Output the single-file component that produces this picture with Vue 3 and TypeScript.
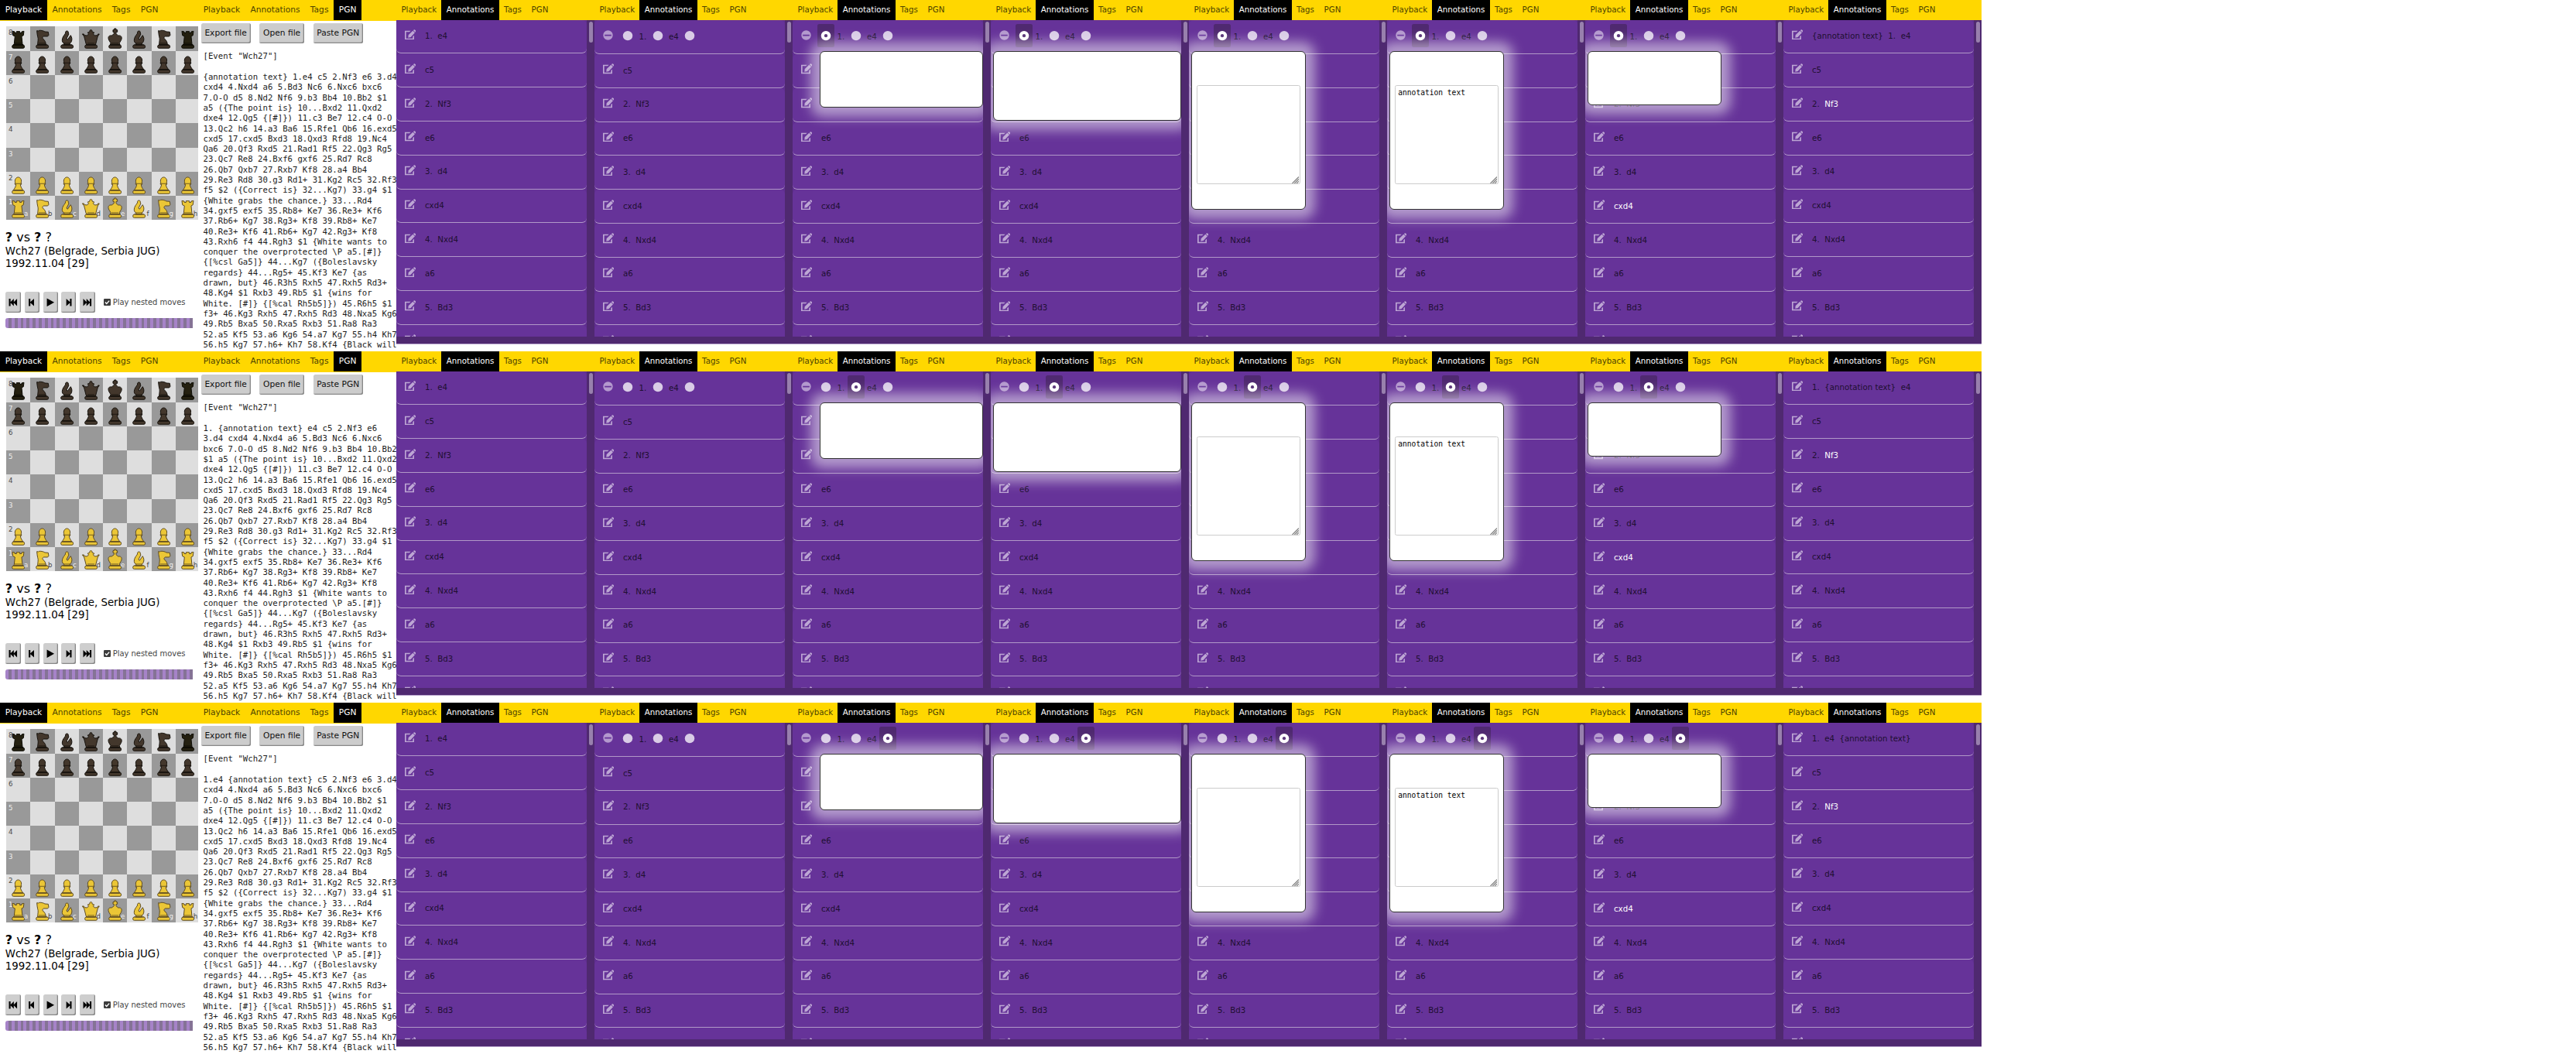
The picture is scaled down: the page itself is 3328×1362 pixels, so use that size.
<script setup lang="ts">
type Kind = 'r' | 'n' | 'b' | 'q' | 'k' | 'p'
interface Popup { left: number; right: number; height: number; area: boolean; text: string }
interface Column { slots: boolean; popup: Popup | null; lit: string; result: boolean }

const tabs = ['Playback', 'Annotations', 'Tags', 'PGN']
const back: Kind[] = ['r', 'n', 'b', 'q', 'k', 'b', 'n', 'r']
const files = 'abcdefgh'

interface Square { dark: boolean; rank: string; file: string; kind: Kind | ''; white: boolean }
const squares: Square[] = []
for (let r = 0; r < 8; r++) {
  for (let f = 0; f < 8; f++) {
    squares.push({
      dark: (r + f) % 2 === 1,
      rank: f === 0 ? String(8 - r) : '',
      file: r === 7 ? files[f] : '',
      kind: r === 0 || r === 7 ? back[f] : r === 1 || r === 6 ? 'p' : '',
      white: r > 4,
    })
  }
}

const base = 'M28 72H66Q71 73 71 79Q71 85 66 85H28Q23 85 23 79Q23 73 28 72Z'
const shapes: Record<Kind, string> = {
  p: 'M36 43C31 36 36 21 46.500 21C57 21 62 36 57 43H59V49H55C56 60 62 67 66 72H27C31 67 37 60 38 49H34V43Z' + base,
  r: 'M24 19L33 21V25L40 26V20H53V26L60 25V21L69 19L67 35L60 39L63 68L66 72H28L31 68L34 39L26 35Z' + base,
  n: 'M26 17L32 18L35 16C44 15 52 18 57 21L70 22L72 34L68 39H52C49 41 47 44 48 47C58 54 61 63 61 72H29C29 58 33 50 29 40C27 33 27 26 26 17Z' + base,
  b: 'M41 27C37 16 55 14 52 27L54 30L45 48L49 52L61 35C66 43 68 52 63 61L58 67V72H35V67L29 60C25 48 34 36 41 27Z' + base,
  q: 'M13 30L19 30L21 35L32 36L38 29L33 25L42 21C40 11 53 11 51 21L60 25L55 29L61 36L72 35L74 30L79 30L73 39L66 66L64 72H29L27 66L20 39Z' + base,
  k: 'M39 14H44V9H51V14H56V22H51V29L59 36C74 34 75 46 70 55L64 65L66 72H28L30 65L24 55C18 44 21 34 34 36L43 29V22H39Z' + base,
}

const rest = `13.Qc2 h6 14.a3 Ba6 15.Rfe1 Qb6 16.exd5
cxd5 17.cxd5 Bxd3 18.Qxd3 Rfd8 19.Nc4
Qa6 20.Qf3 Rxd5 21.Rad1 Rf5 22.Qg3 Rg5
23.Qc7 Re8 24.Bxf6 gxf6 25.Rd7 Rc8
26.Qb7 Qxb7 27.Rxb7 Kf8 28.a4 Bb4
29.Re3 Rd8 30.g3 Rd1+ 31.Kg2 Rc5 32.Rf3
f5 $2 ({Correct is} 32...Kg7) 33.g4 $1
{White grabs the chance.} 33...Rd4
34.gxf5 exf5 35.Rb8+ Ke7 36.Re3+ Kf6
37.Rb6+ Kg7 38.Rg3+ Kf8 39.Rb8+ Ke7
40.Re3+ Kf6 41.Rb6+ Kg7 42.Rg3+ Kf8
43.Rxh6 f4 44.Rgh3 $1 {White wants to
conquer the overprotected \\P a5.[#]}
{[%csl Ga5]} 44...Kg7 ({Boleslavsky
regards} 44...Rg5+ 45.Kf3 Ke7 {as
drawn, but} 46.R3h5 Rxh5 47.Rxh5 Rd3+
48.Kg4 $1 Rxb3 49.Rb5 $1 {wins for
White. [#]} {[%cal Rh5b5]}) 45.R6h5 $1
f3+ 46.Kg3 Rxh5 47.Rxh5 Rd3 48.Nxa5 Kg6
49.Rb5 Bxa5 50.Rxa5 Rxb3 51.Ra8 Ra3
52.a5 Kf5 53.a6 Kg6 54.a7 Kg7 55.h4 Kh7
56.h5 Kg7 57.h6+ Kh7 58.Kf4 {Black will
lose both f-pawns.}`
const opening = `cxd4 4.Nxd4 a6 5.Bd3 Nc6 6.Nxc6 bxc6
7.O-O d5 8.Nd2 Nf6 9.b3 Bb4 10.Bb2 $1
a5 ({The point is} 10...Bxd2 11.Qxd2
dxe4 12.Qg5 {[#]}) 11.c3 Be7 12.c4 O-O
`
const pgn = [
  '{annotation text} 1.e4 c5 2.Nf3 e6 3.d4\n' + opening + rest,
  `1. {annotation text} e4 c5 2.Nf3 e6
3.d4 cxd4 4.Nxd4 a6 5.Bd3 Nc6 6.Nxc6
bxc6 7.O-O d5 8.Nd2 Nf6 9.b3 Bb4 10.Bb2
$1 a5 ({The point is} 10...Bxd2 11.Qxd2
dxe4 12.Qg5 {[#]}) 11.c3 Be7 12.c4 O-O
` + rest,
  '1.e4 {annotation text} c5 2.Nf3 e6 3.d4\n' + opening + rest,
].map((t) => '[Event "Wch27"]\n\n' + t)

const results = [
  ['{annotation text}', '1.', 'e4'],
  ['1.', '{annotation text}', 'e4'],
  ['1.', 'e4', '{annotation text}'],
]
const moves = [['c5'], ['2.', 'Nf3'], ['e6'], ['3.', 'd4'], ['cxd4'], ['4.', 'Nxd4'], ['a6'], ['5.', 'Bd3'], ['Nc6']]

const pop = (left: number, right: number, height: number, area = false, text = ''): Popup => ({ left, right, height, area, text })
const columns: Column[] = [
  { slots: false, popup: null, lit: '', result: false },
  { slots: true, popup: null, lit: '', result: false },
  { slots: true, popup: pop(35.3, 246.3, 72.8), lit: '', result: false },
  { slots: true, popup: pop(3.3, 246.3, 89.8), lit: '', result: false },
  { slots: true, popup: pop(3.3, 150.8, 204.8, true), lit: '', result: false },
  { slots: true, popup: pop(3.3, 150.8, 204.8, true, 'annotation text'), lit: '', result: false },
  { slots: true, popup: pop(3.3, 175.8, 70.5), lit: 'cxd4', result: false },
  { slots: false, popup: null, lit: 'Nf3', result: true },
]
const transport = [
  'M0 0H2V4L6 0V4L10 0V9L6 5V9L2 5V9H0Z',
  'M1.500 0H3.500V4L8 0V9L3.500 5V9H1.500Z',
  'M1 -.5L10 4.500L1 9.500Z',
  'M2 0L6.500 4V0H8.500V9H6.500V5L2 9Z',
  'M0 0L4 4V0L8 4V0H10V9H8V5L4 9V5L0 9Z',
]
</script>

<template>
  <main class="sheet">
    <section v-for="s in 3" :key="s" class="strip">
      <article class="cell">
        <nav><span v-for="t in tabs" :key="t" :class="{ on: t === 'Playback' }">{{ t }}</span></nav>
        <div class="board">
          <div v-for="(q, i) in squares" :key="i" class="sq" :class="{ dark: q.dark }">
            <svg v-if="q.kind" viewBox="0 0 94 94" :class="[q.white ? 'white' : 'black', 'k-' + q.kind]">
              <path :d="shapes[q.kind]" />
              <path v-if="q.kind === 'p'" class="detail" d="M36 46H57M30 72H64" />
              <path v-else class="detail" d="M28 72H66M33 66H60" />
            </svg>
            <span v-if="q.rank" class="rank">{{ q.rank }}</span>
            <span v-if="q.file" class="file">{{ q.file }}</span>
          </div>
        </div>
        <header class="game">
          <p class="players"><b>?</b> vs <b>?</b> ?</p>
          <p>Wch27 (Belgrade, Serbia JUG)</p>
          <p>1992.11.04 [29]</p>
        </header>
        <div class="controls">
          <button v-for="(d, i) in transport" :key="i" :class="{ wide: i === 0 || i === 4 }">
            <svg viewBox="-.5 -1 11 11"><path :d="d" /></svg>
          </button>
          <label>
            <svg class="check" viewBox="0 0 9 9"><rect width="9" height="9" rx="1.200" /><path d="M1.900 4.600L3.700 6.400L7.200 2.600" /></svg>
            Play nested moves
          </label>
        </div>
        <div class="progress"></div>
      </article>

      <article class="cell">
        <nav><span v-for="t in tabs" :key="t" :class="{ on: t === 'PGN' }">{{ t }}</span></nav>
        <div class="fileops"><button>Export file</button><button>Open file</button><button>Paste PGN</button></div>
        <pre>{{ pgn[s - 1] }}</pre>
      </article>

      <article v-for="(c, ci) in columns" :key="ci" class="cell small">
        <nav><span v-for="t in tabs" :key="t" :class="{ on: t === 'Annotations' }">{{ t }}</span></nav>
        <div class="panel">
          <div class="list">
            <div v-if="c.slots" class="row first">
              <svg class="minus" viewBox="0 0 13 13"><path fill-rule="evenodd" d="M6.500 .3A6.200 6.200 0 1 0 6.500 12.700A6.200 6.200 0 1 0 6.500 .3ZM2.200 5.700H10.800V7.500H2.200Z" /></svg>
              <template v-for="n in 3" :key="n">
                <i class="slot" :class="{ picked: c.popup && n === s }"><svg viewBox="0 0 22 29"><circle class="disc" cx="11" cy="15" r="6.200" /><circle v-if="c.popup && n === s" class="dot" cx="11" cy="15" r="2.100" /></svg></i>
                <span v-if="n === 1">1.</span>
                <span v-if="n === 2">e4</span>
              </template>
            </div>
            <div v-else class="row">
              <svg class="edit" viewBox="0 0 43 40"><path d="M23 5H0V40H36V23L31 28V35H5V10H18ZM13 32L14 22L31 5L39 13L23 30ZM33 4L36 1Q38 0 40 2L42 4Q44 6 42 8L40 11Z" /></svg>
              <span v-for="w in (c.result ? results[s - 1] : ['1.', 'e4'])" :key="w">{{ w }}</span>
            </div>
            <div v-for="(m, mi) in moves" :key="mi" class="row">
              <svg class="edit" viewBox="0 0 43 40"><path d="M23 5H0V40H36V23L31 28V35H5V10H18ZM13 32L14 22L31 5L39 13L23 30ZM33 4L36 1Q38 0 40 2L42 4Q44 6 42 8L40 11Z" /></svg>
              <span v-for="w in m" :key="w" :class="{ lit: w === c.lit }">{{ w }}</span>
            </div>
            <div v-if="c.popup" class="popup" :style="{ left: c.popup.left + 'px', width: c.popup.right - c.popup.left + 'px', height: c.popup.height + 'px' }">
              <div v-if="c.popup.area" class="area">
                {{ c.popup.text }}
                <svg viewBox="0 0 9 9"><path d="M.5 9L9 .5M3.300 9L9 3.300M6.100 9L9 6.100" /></svg>
              </div>
            </div>
          </div>
          <div class="thumb"></div>
        </div>
      </article>
    </section>
  </main>
</template>

<style>
body { margin: 0; background: #fff; }
</style>

<style scoped>
.sheet { width: 3328px; height: 1362px; overflow: hidden; background: #fff; font-family: "DejaVu Sans", sans-serif; color: #000; }
.strip { display: flex; height: 454px; }
.cell { width: 256px; height: 454px; overflow: hidden; flex: none; font-size: 10.667px; }
nav { display: flex; height: 26.5px; background: gold; color: #4c4200; }
nav span { height: 26px; line-height: 26px; padding: 0 6.67px; }
nav .on { background: #000; color: #fff; }
.small { font-size: 10.24px; }
.small nav { height: 25.6px; }
.small nav span { height: 25.6px; line-height: 25.6px; padding: 0 6.4px; }

.board { display: grid; grid-template-columns: repeat(8, 31.28px); grid-auto-rows: 31.28px; margin: 7.8px 0 0 8px; width: 250.3px; }
.sq { position: relative; background: #dedede; color: #484848; }
.sq.dark { background: #999; color: #eee; }
.sq svg { display: block; width: 31.28px; height: 31.28px; }
.sq path { stroke-width: 3; stroke-linejoin: round; }
.black path { fill: #43372c; stroke: #15110c; }
.black.k-r path { fill: #242010; stroke: #0c0b04; }
.white path { fill: #ebc636; stroke: #5c4a22; }
.sq path.detail { fill: none; stroke-width: 2.5; }
.rank, .file { position: absolute; font-size: 8.6px; line-height: 10px; }
.rank { left: 3px; top: 3px; }
.file { right: 3px; bottom: 3px; }

.game { margin: 12.7px 0 0 6.8px; font-size: 13.333px; line-height: 16px; }
.game p { margin: 0; white-space: nowrap; }
.game .players { font-size: 16px; line-height: 20px; }
.controls { display: flex; align-items: center; gap: 4.6px; margin: 28.3px 0 0 7px; height: 26.3px; }
button { font: inherit; color: #111; background: #cecece; border: 0; border-radius: 2.5px; box-shadow: inset -1.3px -1.3px #888; padding: 0; flex: none; }
.controls button { width: 19.1px; height: 26.3px; display: grid; place-items: center; }
.controls button.wide { width: 20.3px; }
.controls button svg { width: 11.6px; height: 11.6px; margin-left: -.5px; }
.controls label { display: flex; align-items: center; gap: 2.8px; margin-left: 6px; font-size: 9.95px; color: #444; white-space: nowrap; }
.check { width: 9px; height: 9px; }
.check rect { fill: #3c3c3c; }
.check path { fill: none; stroke: #fff; stroke-width: 1.4; }
.progress { margin: 6.8px 0 0 6.8px; width: 242.6px; height: 13.4px; border-radius: 3px 0 0 3px; background: repeating-linear-gradient(90deg, #a683c8 0 4px, #857396 4px 7.8px); }

.fileops { display: flex; gap: 11.6px; margin: 3.8px 0 0 3.6px; }
.fileops button { height: 25.4px; line-height: 25px; padding: 0 4.8px; border-radius: 2.5px; white-space: nowrap; background: #ccc; }
pre { margin: 10.8px 0 0 6.5px; font: 10.667px/13.3px "DejaVu Sans Mono", monospace; color: #1c1c1c; white-space: pre; }

.panel { display: flex; height: 418.4px; background: #4f2970; border-bottom: 1.3px solid #b7a2cb; }
.list { position: relative; width: 246.3px; height: 409.4px; overflow: hidden; background: #602f91; flex: none; }
.thumb { width: 5.2px; height: 27.2px; margin: 2.2px 0 0 2.6px; border-radius: 3px; background: #9880ad; }
.row { display: flex; align-items: center; height: 43.8px; box-sizing: border-box; padding: 0 0 1.5px 10.9px; background: #663399; border-bottom: 1.2px solid #b198c8; border-radius: 6px; color: #200f31; white-space: nowrap; }
.row.first { height: 44.4px; }
.row span { margin-right: 6.5px; }
.row span.lit { color: #fff; }
.edit { width: 14.3px; height: 13.3px; margin: -3px 11.8px 0 0; fill: #bda6d4; flex: none; }
.minus { width: 13px; height: 13px; margin: -2.5px 8.1px 0 .3px; fill: #b499ce; flex: none; }
.slot { width: 22px; height: 29.3px; border-radius: 2.5px; margin: -1px 3.3px 0 0; flex: none; }
.slot svg { display: block; width: 22px; height: 29.3px; }
.row.first span { margin-right: 3.4px; }
.disc { fill: #d9cce6; }
.picked { background: #4f2970; }
.picked .disc { fill: #fff; }
.dot { fill: #4f2970; }
.popup { position: absolute; top: 40.4px; box-sizing: border-box; border: 1px solid #333; border-radius: 6px; background: #fff; box-shadow: 0 0 15px 12px rgba(255, 255, 255, .5); padding: 43px 6px 0; }
.area { position: relative; box-sizing: border-box; height: 128.4px; border: 1px solid #ccc; border-radius: 2.5px; padding: 3.5px 3px; font: 9.6px/12px "DejaVu Sans Mono", monospace; color: #000; }
.area svg { position: absolute; right: .6px; bottom: .6px; width: 9px; height: 9px; stroke: #888; stroke-width: 1.3; fill: none; }
</style>
